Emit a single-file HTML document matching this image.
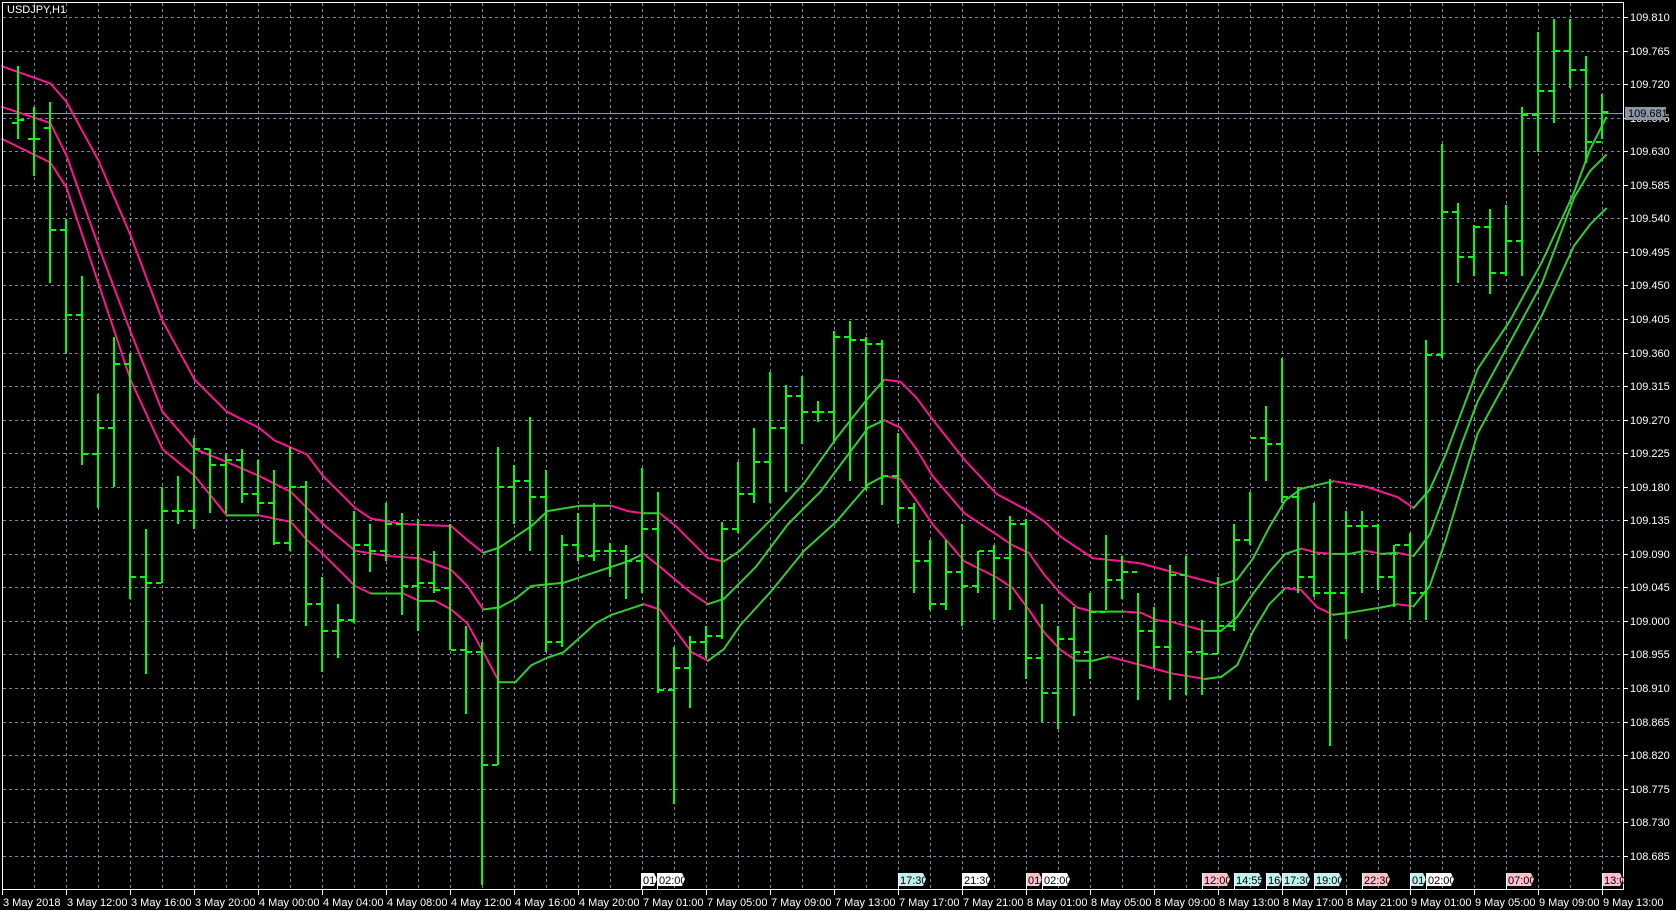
<!DOCTYPE html>
<html><head><meta charset="utf-8"><style>
html,body{margin:0;padding:0;background:#000;width:1676px;height:910px;overflow:hidden}
svg{display:block}
text{font-family:"Liberation Sans",sans-serif;font-size:11px}
</style></head><body>
<svg id="c" width="1676" height="910" xmlns="http://www.w3.org/2000/svg">
<rect width="1676" height="910" fill="#000"/>
<g id="grid"></g>
<g id="lines"></g>
<g id="bars"></g>
<g id="axis"></g>
<text x="7" y="13" fill="#fff">USDJPY,H1</text>
</svg>
<script>
var NS="http://www.w3.org/2000/svg";
function el(p,t,a,txt){var e=document.createElementNS(NS,t);for(var k in a)e.setAttribute(k,a[k]);if(txt!=null)e.textContent=txt;document.getElementById(p).appendChild(e);return e;}
var S=1.0693;
for(var x=34;x<1623;x+=32)el('grid','line',{x1:x+.5,y1:3,x2:x+.5,y2:889,stroke:'#778899','stroke-dasharray':'3,3'});
for(var k=0;k<=25;k++){var y=Math.round(17+k*33.55);el('grid','line',{x1:3,y1:y+.5,x2:1623,y2:y+.5,stroke:'#778899','stroke-dasharray':'3,3'});
 var p=(109.810-k*0.045).toFixed(3);
 el('axis','line',{x1:1623,y1:y+.5,x2:1628,y2:y+.5,stroke:'#fff'});
 el('axis','text',{x:1630,y:y+4,fill:'#fff'},p);}
el('grid','line',{x1:3,y1:113.5,x2:1623,y2:113.5,stroke:'#8a96a6'});
el('axis','rect',{x:1625,y:107,width:41,height:13,fill:'#8a96a6'});
el('axis','text',{x:1628,y:117,fill:'#000'},'109.681');
el('axis','rect',{x:2.5,y:2.5,width:1621,height:887,fill:'none',stroke:'#fff'});
var tl=['3 May 2018','3 May 12:00','3 May 16:00','3 May 20:00','4 May 00:00','4 May 04:00','4 May 08:00','4 May 12:00','4 May 16:00','4 May 20:00','7 May 01:00','7 May 05:00','7 May 09:00','7 May 13:00','7 May 17:00','7 May 21:00','8 May 01:00','8 May 05:00','8 May 09:00','8 May 13:00','8 May 17:00','8 May 21:00','9 May 01:00','9 May 05:00','9 May 09:00','9 May 13:00'];
for(var i=0;i<tl.length;i++){var x=2+64*i;el('axis','line',{x1:x+.5,y1:889,x2:x+.5,y2:895,stroke:'#fff'});el('axis','text',{x:x+1,y:906,fill:'#fff'},tl[i]);}
var tags=[[641,'01:','#fff'],[657,'02:00','#fff'],[898,'17:30','#c0f0f0'],[962,'21:30','#fff'],[1026,'01:','#ffc0cb'],[1042,'02:00','#fff'],[1202,'12:00','#ffc0cb'],[1234,'14:55','#c0f0f0'],[1266,'16:','#c0f0f0'],[1282,'17:30','#c0f0f0'],[1314,'19:00','#c0f0f0'],[1362,'22:30','#ffc0cb'],[1410,'01:','#c0f0f0'],[1426,'02:00','#fff'],[1506,'07:00','#ffc0cb'],[1602,'13:00','#ffc0cb']];
tags.forEach(function(t){var w=t[1].length>3?28:16;if(t[0]==1602)w=21;var x=t[0];
 el('axis','path',{d:'M'+x+' 873H'+(x+w-3)+'L'+(x+w)+' 879L'+(x+w-3)+' 886H'+x+'Z',fill:t[2]});
 el('axis','line',{x1:x+.5,y1:873,x2:x+.5,y2:889,stroke:'#fff'});
 el('axis','text',{x:x+2,y:884,fill:'#000'},t[1]);});
var B=[[62,130,115,112],[100,165,130,130],[95,265,120,215],[205,330,215,295],[258,435,295,425],[368,475,425,400],[315,455,400,340],[330,560,340,540],[495,630,540,545],[455,545,545,478],
[445,490,478,478],[410,495,478,420],[420,480,420,435],[425,480,435,430],[420,470,430,462],[430,480,462,470],[440,510,470,508],[418,515,508,455],[450,585,455,565],[540,628,565,590],
[565,615,590,580],[478,583,580,510],[490,535,510,515],[470,525,515,490],[480,575,490,548],[485,590,548,545],[515,555,545,552],[490,608,550,608],[585,668,608,610],[600,828,610,715],
[418,715,715,455],[435,490,455,450],[390,515,450,465],[440,610,465,600],[500,605,600,510],[480,525,510,520],[470,525,520,515],[508,540,515,515],[510,560,515,525],[438,555,525,495],
[460,648,495,645],[605,752,645,625],[595,662,625,600],[585,615,600,595],[488,598,595,495],[432,498,495,462],[400,470,462,432],[348,470,432,400],[360,460,400,370],[352,415,370,385],
[375,395,385,385],[310,412,385,315],[300,450,315,318],[315,458,318,322],[318,472,322,445],[405,490,445,475],[470,555,475,525],[505,570,525,565],[505,570,565,535],[490,585,535,548],
[515,555,548,515],[510,580,515,522],[483,570,522,490],[485,635,490,615],[565,675,615,648],[585,682,648,598],[568,670,598,610],[555,635,610,572],[500,570,572,542],[520,560,542,535],
[555,655,535,590],[568,625,590,605],[528,655,605,538],[520,650,538,610],[580,650,610,612],[540,612,612,585],[490,590,585,505],[460,510,505,410],[380,450,410,415],[335,470,415,465],
[455,555,465,540],[470,558,540,555],[448,698,555,555],[478,598,555,492],[478,555,492,492],[490,552,492,540],[510,568,540,510],[498,580,510,555],[318,580,555,332],[135,335,332,198],
[190,265,198,240],[210,258,240,212],[195,275,212,255],[192,258,255,225],[100,258,225,108],[30,142,108,85],[18,115,85,48],[18,82,48,65],[52,152,65,133],[88,130,133,105]];
B.forEach(function(b,i){var x=18+16*i;var h=Math.round(b[0]*S),l=Math.round(b[1]*S),o=Math.round(b[2]*S),c=Math.round(b[3]*S);
 el('bars','rect',{x:x-1,y:h,width:2,height:l-h,fill:'#00ff00'});
 el('bars','rect',{x:x-6,y:o-1,width:5,height:2,fill:'#00ff00'});
 el('bars','rect',{x:x+1,y:c-1,width:5,height:2,fill:'#00ff00'});});
var U=[[2,62],[47,78],[62,95],[92,150],[122,220],[152,300],[182,355],[212,385],[242,400],[257,412],[287,425],[302,445],[332,475],[347,485],[377,490],[422,492],[437,505],[452,517],[467,512],[497,492],[512,478],[542,473],[572,473],[587,478],[602,480],[617,480],[632,492],[662,522],[677,525],[692,515],[722,485],[752,452],[782,410],[812,372],[827,355],[842,357],[857,372],[872,392],[902,430],[932,462],[962,478],[977,488],[992,502],[1022,522],[1052,525],[1067,527],[1097,535],[1127,543],[1142,547],[1157,542],[1172,522],[1187,493],[1202,468],[1217,457],[1247,450],[1277,455],[1307,465],[1322,475],[1337,458],[1352,425],[1367,385],[1382,345],[1412,300],[1442,245],[1472,180],[1487,140],[1502,110]];
var M=[[2,100],[47,115],[62,145],[92,230],[122,310],[152,385],[182,420],[212,432],[242,445],[272,460],[287,475],[302,490],[332,515],[362,520],[392,522],[422,533],[437,548],[452,570],[467,568],[482,560],[497,548],[527,545],[557,535],[587,525],[602,518],[617,530],[647,555],[662,565],[677,560],[692,545],[707,530],[737,490],[767,460],[797,420],[812,400],[827,393],[842,400],[857,420],[872,445],[902,480],[932,500],[947,510],[962,517],[977,538],[992,555],[1007,568],[1022,572],[1052,572],[1067,573],[1082,580],[1097,582],[1127,590],[1142,590],[1157,577],[1172,555],[1187,535],[1202,518],[1217,513],[1232,517],[1247,518],[1262,518],[1277,515],[1292,518],[1307,517],[1322,520],[1337,500],[1352,460],[1367,415],[1382,375],[1412,320],[1442,265],[1457,225],[1472,185],[1487,160],[1502,145]];
var L=[[2,130],[47,152],[62,175],[92,265],[122,355],[152,420],[182,445],[212,482],[242,482],[272,488],[287,505],[302,518],[332,548],[347,555],[377,555],[392,562],[407,562],[422,570],[437,583],[452,610],[467,638],[482,638],[497,622],[512,615],[527,610],[557,583],[572,575],[602,565],[617,570],[647,610],[662,618],[677,607],[692,585],[722,552],[752,515],[782,488],[812,453],[827,445],[842,448],[857,468],[872,490],[902,525],[932,540],[947,550],[962,570],[977,592],[992,608],[1007,618],[1022,618],[1037,614],[1052,618],[1067,622],[1097,630],[1127,635],[1142,633],[1157,622],[1172,590],[1187,565],[1202,550],[1217,552],[1232,568],[1247,575],[1262,573],[1292,568],[1307,565],[1322,567],[1337,548],[1352,505],[1367,455],[1382,405],[1412,350],[1442,295],[1472,230],[1487,210],[1502,195]];
[U,M,L].forEach(function(P){for(var i=0;i<P.length-1;i++){var a=P[i],b=P[i+1];
 var col=b[1]<=a[1]?'#32cd32':'#ff1493';
 el('lines','line',{x1:(a[0]*S).toFixed(1),y1:(a[1]*S).toFixed(1),x2:(b[0]*S).toFixed(1),y2:(b[1]*S).toFixed(1),stroke:col,'stroke-width':2,'stroke-linecap':'round'});}});
</script>
</body></html>
